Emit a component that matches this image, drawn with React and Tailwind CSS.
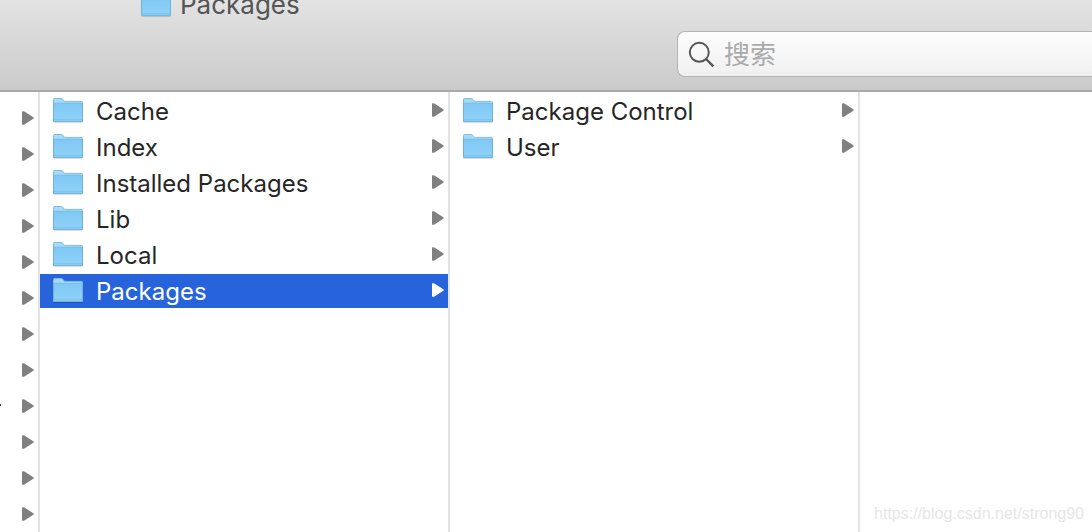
import { useState } from 'react';

const folders = ['Cache', 'Index', 'Installed Packages', 'Lib', 'Local', 'Packages'];
const subFolders = ['Package Control', 'User'];
const parentRows = Array.from({ length: 12 }, (_, i) => i);

function FolderIcon({ className = '' }) {
  return (
    <svg width="32" height="28" viewBox="0 0 32 28" className={`shrink-0 ${className}`} aria-hidden="true">
      <defs>
        <linearGradient id="folderBody" x1="0" y1="0" x2="0" y2="1">
          <stop offset="0" stopColor="#7fc8f4" />
          <stop offset="1" stopColor="#90d2f8" />
        </linearGradient>
      </defs>
      <path d="M1.5 25.4h29" stroke="#000" strokeOpacity="0.14" strokeWidth="1.4" />
      <path
        d="M1.5 2.6Q1.5 1.5 2.6 1.5H9.4Q10.2 1.5 10.7 2.2L12 3.9Q12.4 4.4 13.1 4.4H29.4Q30.5 4.4 30.5 5.5V24.3H1.5Z"
        fill="#a3daf8"
        stroke="#7dbde2"
      />
      <path d="M1.5 6.5H30.5V24.3H1.5Z" fill="url(#folderBody)" />
      <path d="M1.5 6.3H30.5" stroke="#78bbe4" />
      <path d="M2 22.5H30" stroke="#76bbe5" strokeOpacity="0.6" />
      <path d="M1.5 6V24.3H30.5V6" fill="none" stroke="#6db2dd" />
    </svg>
  );
}

function Arrow({ className = '' }) {
  return (
    <svg width="12" height="14" viewBox="0 0 12 14" fill="currentColor" className={`shrink-0 ${className}`} aria-hidden="true">
      <path d="M0 .4Q1.3-.1 2.4.5L11.3 6.2Q12.3 7 11.3 7.8L2.4 13.5Q1.3 14.1 0 13.6Z" />
    </svg>
  );
}

function FolderRow({ name, selected, onClick }) {
  return (
    <li>
      <button
        type="button"
        onClick={onClick}
        className={`flex h-[34px] w-full items-center pl-3 pr-1 text-left text-2xl ${
          selected ? 'bg-[#2763da] text-white' : 'text-[#262626]'
        }`}
      >
        <FolderIcon />
        <span className="ml-3 flex-1 truncate pt-0.5">{name}</span>
        <Arrow className={`mb-0.5 ${selected ? 'text-white' : 'text-[#808080]'}`} />
      </button>
    </li>
  );
}

function App() {
  const [selected, setSelected] = useState('Packages');
  const [selectedSub, setSelectedSub] = useState('');
  const [query, setQuery] = useState('');

  return (
    <div className="flex h-screen flex-col overflow-hidden bg-white font-['Inter','Noto_Sans_CJK_SC',sans-serif]">
      <header className="shrink-0 overflow-hidden border-b-2 border-[#a9a9a9] bg-linear-to-b from-[#e3e3e3] to-[#cbcbcb] pb-[13px]">
        <div className="flex h-[31px] items-start pl-[140px]">
          <FolderIcon className="-mt-[9px]" />
          <h1 className="-mt-[11px] ml-2 text-[26px] leading-8 text-[#555]">Packages</h1>
        </div>
        <label className="ml-[62%] flex h-[46px] items-center rounded-l-lg border border-r-0 border-[#b4b4b4] bg-linear-to-b from-[#fdfdfd] to-[#f0f0f0] pl-[10px]">
          <svg width="28" height="28" viewBox="0 0 28 28" fill="none" stroke="#555" strokeWidth="2" className="shrink-0" aria-hidden="true">
            <circle cx="11.3" cy="12.3" r="9.5" />
            <path d="M18 19L25.4 26.4" strokeWidth="2.4" />
          </svg>
          <input
            type="text"
            aria-label="搜索"
            placeholder="搜索"
            value={query}
            onChange={(e) => setQuery(e.target.value)}
            className="ml-2 h-9 w-full min-w-0 bg-transparent text-[26px] text-[#333] outline-none placeholder:text-[#aaa]"
          />
        </label>
      </header>

      <main className="flex min-h-0 flex-1">
        <ul className="flex w-10 shrink-0 flex-col overflow-hidden border-r-2 border-[#e3e3e3] pt-2">
          {parentRows.map((row) => (
            <li key={row} className="flex h-9 shrink-0 items-center justify-between pr-1 text-[#808080]">
              <span className="h-1 w-px">
                {row === 8 && <span className="block h-0.5 bg-[#444]" />}
              </span>
              <Arrow />
            </li>
          ))}
        </ul>

        <ul className="flex w-[410px] shrink-0 flex-col gap-0.5 border-r-2 border-[#e3e3e3] pt-0.5">
          {folders.map((name) => (
            <FolderRow key={name} name={name} selected={selected === name} onClick={() => setSelected(name)} />
          ))}
        </ul>

        <ul className="flex w-[410px] shrink-0 flex-col gap-0.5 border-r-2 border-[#e3e3e3] pt-0.5">
          {subFolders.map((name) => (
            <FolderRow key={name} name={name} selected={selectedSub === name} onClick={() => setSelectedSub(name)} />
          ))}
        </ul>

        <div className="flex min-w-0 flex-1 items-end justify-end pb-[6px] pr-2">
          <span className="font-['Liberation_Sans',sans-serif] text-base text-[#e6e6e6]">https://blog.csdn.net/strong90</span>
        </div>
      </main>
    </div>
  );
}

export default App;
